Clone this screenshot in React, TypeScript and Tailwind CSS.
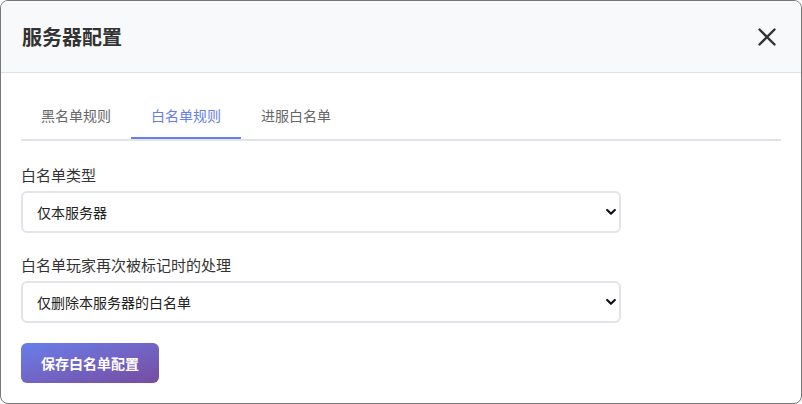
import React, { useState } from "react";

const font = { fontFamily: '"Noto Sans CJK SC", "Noto Sans", sans-serif' };

function Chevron() {
  return (
    <svg width="10" height="7" viewBox="0 0 10 7" className="pointer-events-none absolute right-[5px] top-1/2 -translate-y-1/2">
      <path d="M1.2 1.5 L5 5.2 L8.8 1.5" fill="none" stroke="#111" strokeWidth="2.2" strokeLinecap="round" strokeLinejoin="round" />
    </svg>
  );
}

function Field({ label, value, className }: { label: string; value: string; className?: string }) {
  return (
    <div className={className}>
      <div className="text-[15px] leading-[22px] text-[#333] mb-[5px]">{label}</div>
      <div className="relative w-[600px]">
        <select
          defaultValue={value}
          className="appearance-none w-full h-[42px] border-2 border-[#e1e5e9] rounded-[6px] bg-white pl-[14px] pr-8 text-[14px] text-[#222] outline-none"
          style={font}
        >
          <option>{value}</option>
        </select>
        <Chevron />
      </div>
    </div>
  );
}

export default function App() {
  const [tab, setTab] = useState(1);
  const tabs = ["黑名单规则", "白名单规则", "进服白名单"];
  return (
    <div className="w-[802px] h-[404px] bg-white" style={font}>
      <div className="w-full h-full border border-[#777] rounded-[8px] overflow-hidden flex flex-col bg-white">
        <div className="h-[72px] shrink-0 bg-[#f8f9fa] border-b border-[#dee2e6] flex items-center justify-between pl-[21px] pr-[24px]">
          <h2 className="text-[20px] font-bold text-[#333] leading-none">服务器配置</h2>
          <button className="w-[20px] h-[20px] flex items-center justify-center">
            <svg width="18" height="18" viewBox="0 0 18 18">
              <path d="M1.5 1.5 L16.5 16.5 M16.5 1.5 L1.5 16.5" stroke="#333" strokeWidth="2.4" strokeLinecap="round" />
            </svg>
          </button>
        </div>
        <div className="px-[20px] pt-[20px]">
          <div className="flex border-b-2 border-[#e1e5e9] mb-[23px]">
            {tabs.map((t, i) => (
              <button
                key={t}
                onClick={() => setTab(i)}
                className={
                  "px-[20px] pt-[12px] pb-[12px] text-[14px] leading-[20px] border-b-2 " +
                  (i === tab ? "text-[#667eea] border-[#667eea]" : "text-[#666] border-transparent")
                }
              >
                {t}
              </button>
            ))}
          </div>
          <Field label="白名单类型" value="仅本服务器" className="mb-[21px]" />
          <Field label="白名单玩家再次被标记时的处理" value="仅删除本服务器的白名单" className="mb-[20px]" />
          <button className="h-[40px] px-[20px] rounded-[6px] bg-gradient-to-br from-[#667eea] to-[#764ba2] text-white text-[14px] font-bold">
            保存白名单配置
          </button>
        </div>
      </div>
    </div>
  );
}
